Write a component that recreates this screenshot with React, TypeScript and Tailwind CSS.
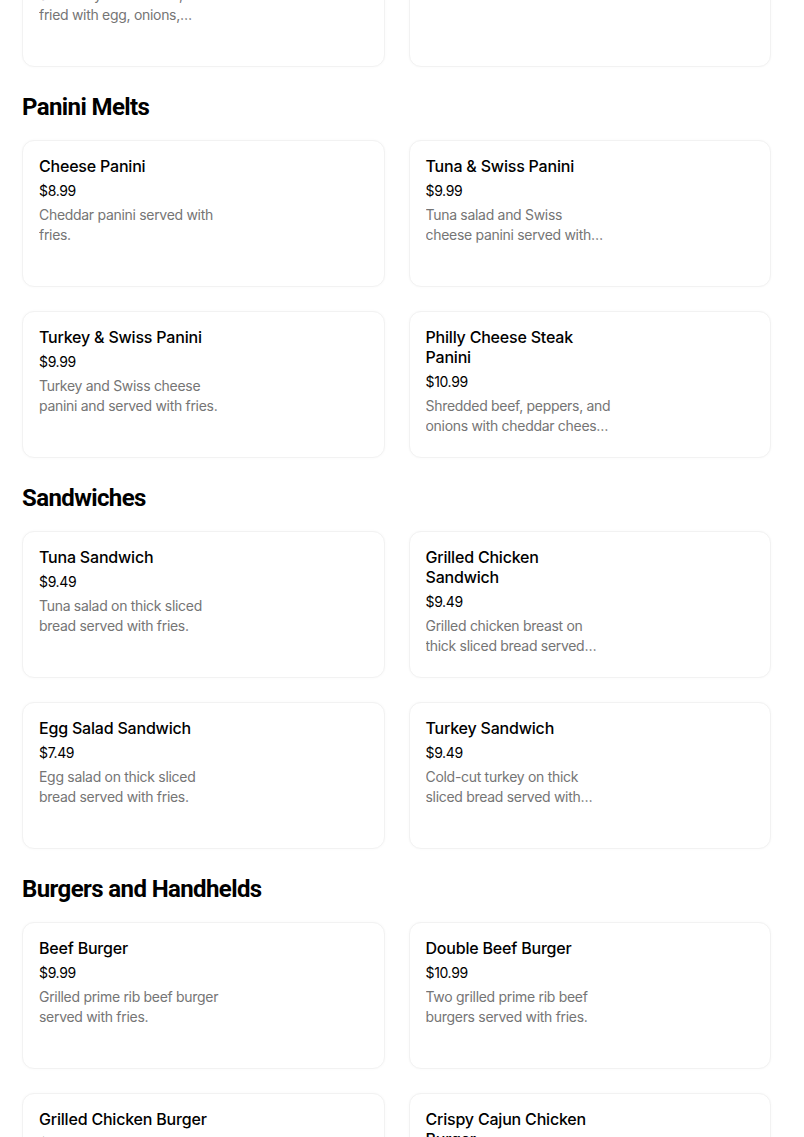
import React from "react";

interface MenuItem {
  title: string;
  price?: string;
  description?: string;
}

interface MenuSection {
  name?: string;
  items: MenuItem[];
}

const sections: MenuSection[] = [
  {
    // tail of the previous section, scrolled mostly out of view
    items: [
      {
        title: "Fried Rice",
        price: "$10.99",
        description: "Sanna style diced rice, stir fried with egg, onions, scallions and soy sauce.",
      },
      { title: "Vegetable Fried Rice", price: "$9.99" },
    ],
  },
  {
    name: "Panini Melts",
    items: [
      { title: "Cheese Panini", price: "$8.99", description: "Cheddar panini served with fries." },
      {
        title: "Tuna & Swiss Panini",
        price: "$9.99",
        description: "Tuna salad and Swiss cheese panini served with fries.",
      },
      {
        title: "Turkey & Swiss Panini",
        price: "$9.99",
        description: "Turkey and Swiss cheese panini and served with fries.",
      },
      {
        title: "Philly Cheese Steak Panini",
        price: "$10.99",
        description: "Shredded beef, peppers, and onions with cheddar cheese panini served with fries.",
      },
    ],
  },
  {
    name: "Sandwiches",
    items: [
      { title: "Tuna Sandwich", price: "$9.49", description: "Tuna salad on thick sliced bread served with fries." },
      {
        title: "Grilled Chicken Sandwich",
        price: "$9.49",
        description: "Grilled chicken breast on thick sliced bread served with fries.",
      },
      { title: "Egg Salad Sandwich", price: "$7.49", description: "Egg salad on thick sliced bread served with fries." },
      {
        title: "Turkey Sandwich",
        price: "$9.49",
        description: "Cold-cut turkey on thick sliced bread served with fries.",
      },
    ],
  },
  {
    name: "Burgers and Handhelds",
    items: [
      { title: "Beef Burger", price: "$9.99", description: "Grilled prime rib beef burger served with fries." },
      {
        title: "Double Beef Burger",
        price: "$10.99",
        description: "Two grilled prime rib beef burgers served with fries.",
      },
      {
        title: "Grilled Chicken Burger",
        price: "$9.99",
        description: "Grilled chicken breast burger served with fries.",
      },
      {
        title: "Crispy Cajun Chicken Burger",
        price: "$10.49",
        description: "Crispy cajun chicken breast burger served with fries.",
      },
    ],
  },
];

function ItemCard({ item }: { item: MenuItem }) {
  return (
    <div className="h-[147px] rounded-xl border border-[#f2f2f2] bg-white px-4 pt-[15px] shadow-[0_0_3px_rgba(0,0,0,0.03)]">
      <div className="w-[185px] font-['Inter',sans-serif]">
        <h3 className="text-[16px] leading-5 font-medium tracking-[-0.2px] text-black">{item.title}</h3>
        {item.price && <p className="mt-[5px] text-[14px] leading-5 tracking-tight text-black">{item.price}</p>}
        {item.description && (
          <p className="mt-1 line-clamp-2 text-[14px] leading-5 tracking-[-0.3px] text-[#757575]">
            {item.description}
          </p>
        )}
      </div>
    </div>
  );
}

export default function App() {
  return (
    <div className="h-[1137px] overflow-hidden bg-white font-['Roboto',sans-serif]">
      <div className="-mt-[80px] ml-[22px] w-[749px]">
        {sections.map((section, i) => (
          <section key={i}>
            {section.name && (
              <h2 className="mt-6 mb-[17px] text-2xl leading-8 font-bold tracking-tight text-black">
                {section.name}
              </h2>
            )}
            <div className="grid grid-cols-2 gap-6">
              {section.items.map((item) => (
                <ItemCard key={item.title} item={item} />
              ))}
            </div>
          </section>
        ))}
      </div>
    </div>
  );
}
